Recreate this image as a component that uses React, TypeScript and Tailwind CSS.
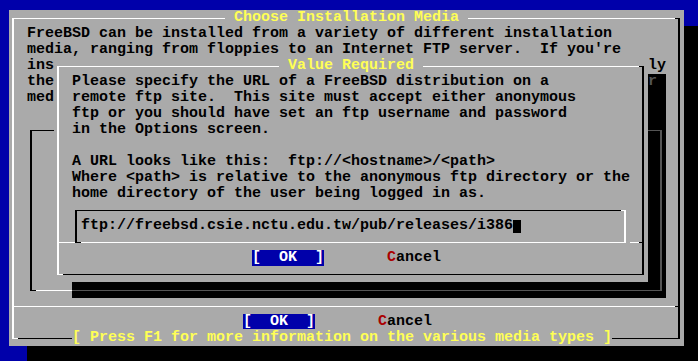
import type { ReactNode } from 'react'

// Text-mode screen: every cell is 9x16, box lines run through the middle of their cells.

// only the parts of the intro that the prompt dialog leaves uncovered
const INTRO = [
  'FreeBSD can be installed from a variety of different installation',
  "media, ranging from floppies to an Internet FTP server.  If you're",
]

const PROMPT = [
  'Please specify the URL of a FreeBSD distribution on a',
  'remote ftp site.  This site must accept either anonymous',
  'ftp or you should have set an ftp username and password',
  'in the Options screen.',
  '',
  'A URL looks like this:  ftp://<hostname>/<path>',
  'Where <path> is relative to the anonymous ftp directory or the',
  'home directory of the user being logged in as.',
]

const URL_VALUE = 'ftp://freebsd.csie.nctu.edu.tw/pub/releases/i386'

type Tone = 'raised' | 'sunken' | 'dim'

const EDGES: Record<Tone, string> = {
  raised: 'border-t-white border-l-white border-r-black border-b-black',
  sunken: 'border-t-black border-l-black border-r-white border-b-white',
  dim: 'border-[#555555]',
}
// the ┐ corner takes the right/bottom colour, the └ corner the top/left one
const CORNER_TR: Record<Tone, string> = { raised: 'bg-black', sunken: 'bg-white', dim: 'bg-[#555555]' }
const CORNER_BL: Record<Tone, string> = { raised: 'bg-white', sunken: 'bg-black', dim: 'bg-[#555555]' }

function Box({
  tone = 'raised',
  className = '',
  children,
}: {
  tone?: Tone
  className?: string
  children?: ReactNode
}) {
  return (
    <div className={`border-t border-b border-l-2 border-r-2 ${EDGES[tone]} ${className}`}>
      <span className={`absolute -top-px -right-[2px] w-[5px] h-px ${CORNER_TR[tone]}`} />
      <span className={`absolute -bottom-px -left-[2px] w-[6px] h-px ${CORNER_BL[tone]}`} />
      {children}
    </div>
  )
}

function Title({ text }: { text: string }) {
  return (
    <div className="relative h-4 flex justify-center whitespace-pre">
      <span className="bg-[#aaaaaa] text-[#ffff55]">{` ${text} `}</span>
    </div>
  )
}

function Lines({ lines }: { lines: string[] }) {
  return (
    <div className="pl-[18px]">
      {lines.map((l, i) => (
        <div key={i} className="h-4 whitespace-pre">
          {l}
        </div>
      ))}
    </div>
  )
}

function Buttons({ offset }: { offset: string }) {
  return (
    <div className="h-4 flex whitespace-pre">
      <span className={`${offset} bg-[#0000aa] text-white`}>[  OK  ]</span>
      <span className="ml-[63px]">
        <span className="text-[#aa0000]">C</span>ancel
      </span>
    </div>
  )
}

function ValueRequired() {
  return (
    <div className="absolute left-[45px] top-12 w-[594px] h-[224px] bg-[#aaaaaa] flex flex-col">
      <Box className="absolute left-[3px] top-2 w-[587px] h-[209px]" />
      <Title text="Value Required" />
      <Lines lines={PROMPT} />

      {/* input field, its bottom edge shares the row with the dialog separator */}
      <div className="relative h-12 pt-2 pl-[21px]">
        <span className="absolute left-[3px] top-10 w-[18px] h-px bg-white" />
        <span className="absolute left-[576px] top-10 w-[9px] h-px bg-white" />
        <span className="absolute left-[585px] top-10 w-[5px] h-px bg-black" />
        <Box tone="sunken" className="relative w-[551px] h-[33px] pl-1 pt-[7px] flex items-start">
          <span className="whitespace-pre">{URL_VALUE}</span>
          <span className="mt-[2px] w-2 h-[13px] bg-black" />
        </Box>
      </div>

      <Buttons offset="ml-[198px]" />
      <div className="h-4" />
    </div>
  )
}

export default function App() {
  return (
    <div className="w-[698px] h-[361px] overflow-hidden bg-[#0000aa] pl-[9px] pt-[10px] font-['Liberation_Mono','DejaVu_Sans_Mono',monospace] text-[15px] leading-4 font-bold text-black">
      <div className="relative w-[675px] h-[336px]">
        <div className="absolute left-[18px] top-4 w-[675px] h-[336px] bg-black" />

        <div className="relative h-full flex flex-col bg-[#aaaaaa]">
          <Box className="absolute left-[3px] top-2 w-[668px] h-[321px]" />
          <Title text="Choose Installation Media" />
          <Lines lines={INTRO} />
          <div className="h-4 pl-[18px] flex whitespace-pre">
            <span>ins</span>
            <span className="ml-[594px]">ly</span>
          </div>
          <Lines lines={['the', 'med']} />
          <div className="flex-1" />

          <div className="h-4 pt-2 flex">
            <span className="ml-[3px] w-[663px] h-px bg-white" />
            <span className="w-[5px] h-px bg-black" />
          </div>
          <Buttons offset="ml-[234px]" />
          <div className="relative h-4 pl-[63px] whitespace-pre">
            <span className="bg-[#aaaaaa] text-[#ffff55]">
              [ Press F1 for more information on the various media types ]
            </span>
          </div>

          {/* media list, mostly hidden behind the prompt */}
          <Box tone="sunken" className="absolute left-[21px] top-[120px] w-[632px] h-[161px]" />

          {/* prompt shadow: whatever lies under it shows dimmed */}
          <div className="absolute left-[63px] top-16 w-[594px] h-[224px] bg-black overflow-hidden text-[#555555]">
            <span className="absolute left-[576px] top-0">r</span>
            <Box tone="dim" className="absolute -left-[42px] top-[56px] w-[632px] h-[161px]" />
          </div>

          <ValueRequired />
        </div>
      </div>
    </div>
  )
}
